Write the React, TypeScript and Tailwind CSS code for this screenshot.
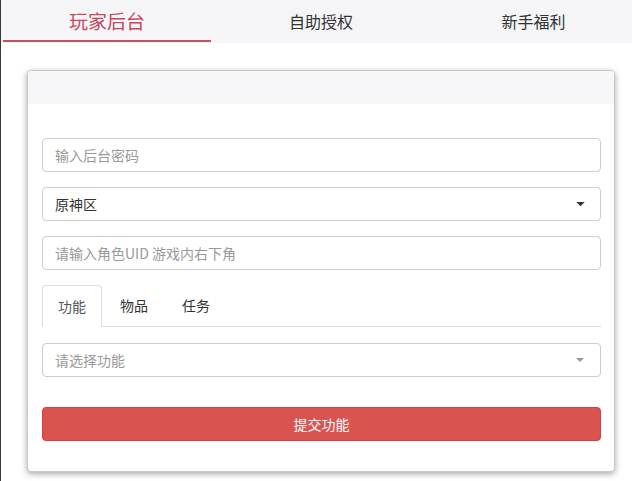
import React from "react";

export default function App() {
  const font = { fontFamily: '"Noto Sans CJK SC", "Noto Sans", sans-serif' };
  return (
    <div
      className="w-[632px] h-[481px] bg-white border-l border-[#3a3a3a] overflow-hidden text-[#333]"
      style={font}
    >
      {/* top nav */}
      <div className="h-[43px] bg-[#f5f5f7] flex pl-[2px]">
        <div className="w-[208px] h-full flex flex-col">
          <div className="flex-1 flex items-center justify-center text-[19px] text-[#c4485e] pt-[2px]">
            玩家后台
          </div>
          <div className="h-[2px] bg-[#c4525b] mb-[1px]" />
        </div>
        <div className="w-[212px] h-full flex items-center justify-center text-[16px] text-[#333] pl-[8px] pb-[1px]">
          自助授权
        </div>
        <div className="flex-1 h-full flex items-center justify-center text-[16px] text-[#333] pl-[12px] pb-[1px]">
          新手福利
        </div>
      </div>

      {/* card */}
      <div className="mt-[27px] ml-[26px] w-[588px] h-[402px] bg-white border border-[#c8c8c8] rounded-[4px] shadow-[0_2px_6px_rgba(0,0,0,0.35)] overflow-hidden flex flex-col">
        <div className="h-[33px] bg-[#f7f7f9]" />
        <div className="pl-[14px] pr-[13px] pt-[34px] flex flex-col">
          <div className="h-[34px] border border-[#ccc] rounded-[4px] flex items-center px-[12px] text-[14px] text-[#999]">
            输入后台密码
          </div>
          <div className="mt-[15px] h-[34px] border border-[#ccc] rounded-[4px] flex items-center justify-between px-[12px] text-[14px] text-[#333]">
            <span>原神区</span>
            <svg width="9" height="5" viewBox="0 0 10 6" className="mr-[3px]">
              <path d="M0 0 L10 0 L5 5 Z" fill="#333" />
            </svg>
          </div>
          <div className="mt-[15px] h-[34px] border border-[#ccc] rounded-[4px] flex items-center px-[12px] text-[14px] text-[#999]">
            请输入角色UID 游戏内右下角
          </div>

          {/* tabs */}
          <div className="mt-[15px] flex border-b border-[#ddd] h-[42px] text-[14px]">
            <div className="h-[42px] -mb-[1px] px-[15px] border border-[#ddd] border-b-white rounded-t-[4px] bg-white flex items-center text-[#555] mr-[2px]">
              功能
            </div>
            <div className="h-[41px] px-[16px] flex items-center text-[#333] mr-[2px]">物品</div>
            <div className="h-[41px] px-[16px] flex items-center text-[#333]">任务</div>
          </div>

          <div className="mt-[16px] h-[34px] border border-[#ccc] rounded-[4px] flex items-center justify-between px-[12px] text-[14px] text-[#999]">
            <span>请选择功能</span>
            <svg width="8" height="5" viewBox="0 0 10 6" className="mr-[4px]">
              <path d="M0 0 L10 0 L5 5 Z" fill="#999" />
            </svg>
          </div>

          <div className="mt-[30px] h-[34px] rounded-[4px] bg-[#d9534f] border border-[#d43f3a] flex items-center justify-center text-[14px] text-white">
            提交功能
          </div>
        </div>
      </div>
    </div>
  );
}
